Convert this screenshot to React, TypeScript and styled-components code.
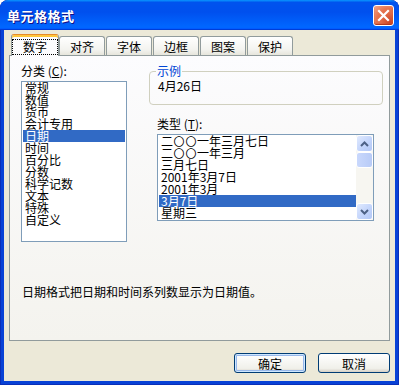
import styled, { createGlobalStyle } from "styled-components";

const GlobalStyle = createGlobalStyle`
  html, body {
    margin: 0;
    padding: 0;
    background: #ffffff;
  }
  body {
    font-family: "Noto Sans CJK SC", "DejaVu Sans", sans-serif;
    font-size: 12px;
    color: #000;
  }
`;

const categories = ["常规", "数值", "货币", "会计专用", "日期", "时间", "百分比", "分数", "科学记数", "文本", "特殊", "自定义"];
const types = ["二〇〇一年三月七日", "二〇〇一年三月", "三月七日", "2001年3月7日", "2001年3月", "3月7日", "星期三"];
const tabs = ["数字", "对齐", "字体", "边框", "图案", "保护"];

// the CJK font draws 〇 bigger than the old bitmap font, so shrink it
function TypeText({ text }: { text: string }) {
  return (
    <>
      {text.split(/(〇)/).map((part, i) =>
        part === "〇" ? <Zero key={i}>{part}</Zero> : part
      )}
    </>
  );
}

function Chevron({ up }: { up?: boolean }) {
  return (
    <svg width="9" height="6" viewBox="0 0 9 6">
      <path
        d={up ? "M1 5 L4.5 1.5 L8 5" : "M1 1 L4.5 4.5 L8 1"}
        fill="none"
        stroke="#4D6185"
        strokeWidth="2"
      />
    </svg>
  );
}

function App() {
  return (
    <>
      <GlobalStyle />
      <Window>
        <TitleBar>
          <Title>单元格格式</Title>
          <CloseButton>
            <svg width="13" height="13" viewBox="0 0 13 13">
              <path d="M2 2 L11 11 M11 2 L2 11" stroke="#fff" strokeWidth="2.2" strokeLinecap="square" />
            </svg>
          </CloseButton>
        </TitleBar>
        <Body>
          <TabStrip>
            {tabs.map((t, i) => (
              <Tab key={t} active={i === 0}>
                {i === 0 ? <Focus>{t}</Focus> : t}
              </Tab>
            ))}
          </TabStrip>
          <Panel>
            <TopGrid>
              <Column>
                <Label>
                  分类 (<u>C</u>):
                </Label>
                <ListBox>
                  <Items>
                    {categories.map((c) => (
                      <Item key={c} selected={c === "日期"}>
                        {c}
                      </Item>
                    ))}
                  </Items>
                </ListBox>
              </Column>
              <Column>
                <Group>
                  <Legend>示例</Legend>
                  <Sample>4月26日</Sample>
                </Group>
                <TypeLabel>
                  类型 (<u>T</u>):
                </TypeLabel>
                <TypeList>
                  <Items>
                    {types.map((t) => (
                      <Item key={t} selected={t === "3月7日"}>
                        <TypeText text={t} />
                      </Item>
                    ))}
                  </Items>
                  <ScrollBar>
                    <ScrollButton>
                      <Chevron up />
                    </ScrollButton>
                    <Thumb />
                    <Track />
                    <ScrollButton>
                      <Chevron />
                    </ScrollButton>
                  </ScrollBar>
                </TypeList>
              </Column>
            </TopGrid>
            <Description>日期格式把日期和时间系列数显示为日期值。</Description>
          </Panel>
          <ButtonRow>
            <Button primary>确定</Button>
            <Button>取消</Button>
          </ButtonRow>
        </Body>
      </Window>
    </>
  );
}

export default App;

const Window = styled.div`
  width: 399px;
  height: 385px;
  box-sizing: border-box;
  display: flex;
  flex-direction: column;
  background: #0842d6;
  border-radius: 8px 8px 0 0;
  padding: 0 4px 4px;
  box-shadow: inset 1px 0 #0a2fb8, inset -1px 0 #0a2fb8, inset 0 -1px #0a2fb8;
  overflow: hidden;
`;

const TitleBar = styled.div`
  height: 30px;
  margin: 0 -4px;
  padding: 0 5px 0 7px;
  display: flex;
  align-items: center;
  justify-content: space-between;
  border-radius: 8px 8px 0 0;
  background: linear-gradient(
    180deg,
    #0997ff,
    #0053ee 8%,
    #0050ee 40%,
    #0066ff 88%,
    #0066ff 93%,
    #005bff 95%,
    #003dd7 96%,
    #003dd7
  );
`;

const Title = styled.span`
  color: #fff;
  font-weight: bold;
  font-size: 13px;
  letter-spacing: 0.5px;
  text-shadow: 1px 1px #0f1089;
  margin-top: 1px;
`;

const CloseButton = styled.div`
  width: 21px;
  height: 21px;
  box-sizing: border-box;
  border: 1px solid #fff;
  border-radius: 3px;
  display: flex;
  align-items: center;
  justify-content: center;
  background: radial-gradient(circle at 85% 85%, #cc4625 0%, #e16a46 40%, #e5744f 60%, #f0a68e 100%);
  box-shadow: inset 0 -1px 1px #b1361a;
`;

const Body = styled.div`
  flex: 1;
  display: flex;
  flex-direction: column;
  background: #ece9d8;
  padding: 5px 5px 0;
`;

const TabStrip = styled.div`
  height: 21px;
  display: flex;
  align-items: flex-end;
  gap: 1px;
  padding-left: 4px;
  margin-bottom: -1px;
  position: relative;
  z-index: 1;
`;

interface TabProps {
  active?: boolean;
}

const Tab = styled.div<TabProps>`
  box-sizing: border-box;
  width: 46px;
  display: flex;
  align-items: center;
  justify-content: center;
  border: 1px solid #919b9c;
  border-bottom: none;
  border-radius: 3px 3px 0 0;
  ${({ active }) =>
    active
      ? `
    height: 22px;
    width: 48px;
    margin: 0 -1px 0 -2px;
    background: #fcfcfe;
    border-top: 1px solid #e68b2c;
    box-shadow: inset 0 2px #ffc73c;
    padding-top: 2px;
  `
      : `
    height: 19px;
    margin-bottom: 1px;
    background: linear-gradient(180deg, #ffffff, #f3f3ef 70%, #e6e5dc);
  `}
`;

const Focus = styled.span`
  outline: 1px dotted #000;
  padding: 0 10px;
  line-height: 14px;
`;

const Panel = styled.div`
  height: 286px;
  box-sizing: border-box;
  border: 1px solid #919b9c;
  background: linear-gradient(180deg, #fcfcfe, #f4f3ee);
  padding: 9px 6px 0 11px;
  display: flex;
  flex-direction: column;
`;

const TopGrid = styled.div`
  display: grid;
  grid-template-columns: 106px 234px;
  column-gap: 22px;
`;

const Column = styled.div`
  display: flex;
  flex-direction: column;
`;

const Label = styled.div`
  line-height: 12px;
  height: 12px;
  margin-bottom: 4px;
`;

const TypeLabel = styled(Label)`
  margin: 13px 0 4px 8px;
`;

const ListBox = styled.div`
  height: 161px;
  box-sizing: border-box;
  border: 1px solid #7f9db9;
  background: #fff;
  padding: 0 1px;
  display: flex;
`;

const TypeList = styled(ListBox)`
  height: 87px;
  width: 217px;
  margin-left: 8px;
  padding: 0 0 0 1px;
`;

const Items = styled.div`
  flex: 1;
  display: flex;
  flex-direction: column;
`;

interface ItemProps {
  selected?: boolean;
}

const Item = styled.div<ItemProps>`
  height: 12px;
  line-height: 12px;
  padding-left: 2px;
  white-space: nowrap;
  background: ${({ selected }) => (selected ? "#316ac5" : "transparent")};
  color: ${({ selected }) => (selected ? "#fff" : "#000")};
`;

const Zero = styled.span`
  display: inline-block;
  width: 12px;
  text-align: center;
  font-size: 11px;
  line-height: 12px;
  vertical-align: top;
`;

const ScrollBar = styled.div`
  width: 17px;
  display: flex;
  flex-direction: column;
  background: #f7f6f1;
`;

const ScrollButton = styled.div`
  width: 17px;
  height: 17px;
  box-sizing: border-box;
  border: 1px solid #fff;
  border-radius: 3px;
  background: linear-gradient(135deg, #e1eafe, #c1d3fb 60%, #b4c8f6);
  display: flex;
  align-items: center;
  justify-content: center;
`;

const Thumb = styled.div`
  height: 16px;
  box-sizing: border-box;
  border: 1px solid #fff;
  border-radius: 3px;
  background: linear-gradient(90deg, #c9d8fc, #b8cbf7);
`;

const Track = styled.div`
  flex: 1;
`;

const Group = styled.fieldset`
  margin: 0;
  padding: 3px 8px 10px;
  min-inline-size: 0;
  height: 40px;
  box-sizing: border-box;
  border: 1px solid #d0d0bf;
  border-radius: 4px;
`;

const Legend = styled.legend`
  padding: 0 1px;
  margin-left: -2px;
  line-height: 12px;
  color: #0046d5;
`;

const Sample = styled.div`
  line-height: 12px;
`;

const Description = styled.div`
  margin: 44px 0 0 1px;
  line-height: 12px;
`;

const ButtonRow = styled.div`
  display: flex;
  justify-content: flex-end;
  gap: 12px;
  margin-top: 12px;
`;

interface ButtonProps {
  primary?: boolean;
}

const Button = styled.div<ButtonProps>`
  width: 72px;
  height: 20px;
  box-sizing: border-box;
  border: 1px solid #003c74;
  border-radius: 3px;
  display: flex;
  align-items: center;
  justify-content: center;
  background: linear-gradient(180deg, #ffffff, #f0f0ea 80%, #d6d0c5);
  ${({ primary }) => primary && `box-shadow: inset 0 0 0 1px #cee7ff, inset 0 0 0 2px #98b8ea;`}
`;
